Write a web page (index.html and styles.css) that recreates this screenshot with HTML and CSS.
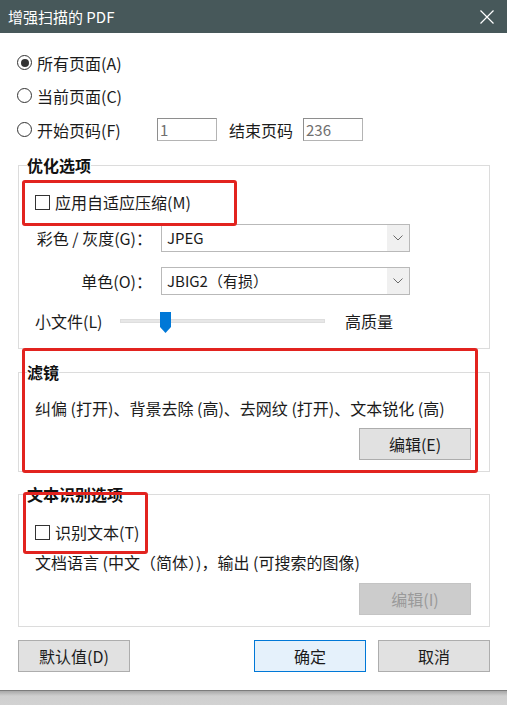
FILE: index.html
```html
<!DOCTYPE html>
<html lang="zh-CN">
<head>
<meta charset="utf-8">
<title>增强扫描的 PDF</title>
<link rel="stylesheet" href="styles.css">
</head>
<body>
<div class="dialog">
  <div class="titlebar">
    <span class="title">增强扫描的 PDF</span>
    <svg class="close" width="14" height="14" viewBox="0 0 14 14"><path d="M0.5 0.5L13.5 13.5M13.5 0.5L0.5 13.5" stroke="#ffffff" stroke-width="1.2" fill="none"/></svg>
  </div>
  <div class="content">
    <div class="pages">
      <div class="radio-row"><span class="radio checked"></span><span>所有页面(A)</span></div>
      <div class="radio-row"><span class="radio"></span><span>当前页面(C)</span></div>
      <div class="radio-row">
        <span class="radio"></span><span class="range-label">开始页码(F)</span>
        <span class="field">1</span>
        <span class="end-label">结束页码</span>
        <span class="field">236</span>
      </div>
    </div>

    <fieldset class="group g-opt">
      <legend>优化选项</legend>
      <div class="group-body">
        <div class="check-row"><span class="check"></span><span>应用自适应压缩(M)</span></div>
        <div class="combo-row">
          <span class="combo-label">彩色 / 灰度(G)：</span>
          <div class="combo"><span class="combo-value">JPEG</span><span class="combo-arrow"><svg width="10" height="6" viewBox="0 0 10 6"><path d="M0.5 0.5L5 5L9.5 0.5" stroke="#6a6a6a" stroke-width="1" fill="none"/></svg></span></div>
        </div>
        <div class="combo-row combo-row-2">
          <span class="combo-label">单色(O)：</span>
          <div class="combo"><span class="combo-value">JBIG2（有损）</span><span class="combo-arrow"><svg width="10" height="6" viewBox="0 0 10 6"><path d="M0.5 0.5L5 5L9.5 0.5" stroke="#6a6a6a" stroke-width="1" fill="none"/></svg></span></div>
        </div>
        <div class="slider-row">
          <span class="slider-label">小文件(L)</span>
          <div class="track"><span class="thumb"></span></div>
          <span>高质量</span>
        </div>
      </div>
    </fieldset>

    <fieldset class="group g-filter">
      <legend>滤镜</legend>
      <div class="group-body">
        <div class="text-row">纠偏 (打开)、背景去除 (高)、去网纹 (打开)、文本锐化 (高)</div>
        <div class="btn-row"><button class="btn">编辑(E)</button></div>
      </div>
    </fieldset>

    <fieldset class="group g-ocr">
      <legend>文本识别选项</legend>
      <div class="group-body">
        <div class="check-row"><span class="check"></span><span>识别文本(T)</span></div>
        <div class="text-row text-row-ocr">文档语言 (中文（简体）)，输出 (可搜索的图像)</div>
        <div class="btn-row btn-row-ocr"><button class="btn btn-disabled">编辑(I)</button></div>
      </div>
    </fieldset>

    <div class="footer">
      <button class="btn">默认值(D)</button>
      <div class="footer-right">
        <button class="btn btn-default">确定</button>
        <button class="btn">取消</button>
      </div>
    </div>
  </div>

  <div class="mark mark-1"></div>
  <div class="mark mark-2"></div>
  <div class="mark mark-3"></div>
</div>
<div class="desk"></div>
</body>
</html>
```

FILE: styles.css
```css
* { box-sizing: border-box; }

html, body {
  margin: 0;
  padding: 0;
}

body {
  width: 507px;
  height: 705px;
  overflow: hidden;
  background: #cfcfcf;
  font-family: "Noto Sans CJK SC", "Noto Sans", sans-serif;
  font-size: 16px;
  color: #1b1b1b;
}

.dialog {
  position: relative;
  height: 690px;
  background: #ffffff;
}

.titlebar {
  height: 33px;
  background: #47585a;
  display: flex;
  align-items: center;
  justify-content: space-between;
  padding: 0 13px 0 8px;
  color: #ffffff;
}

.title {
  font-size: 15px;
  line-height: 20px;
}

.close { display: block; }

.content {
  padding: 13px 17px 0 18px;
}

/* page range radios */
.pages {
  display: flex;
  flex-direction: column;
}

.radio-row {
  height: 33px;
  display: flex;
  align-items: center;
  line-height: 22px;
}

.radio-row:last-child { height: 35px; }

.radio {
  width: 15px;
  height: 15px;
  border: 1px solid #333333;
  border-radius: 50%;
  margin-left: -1px;
  margin-right: 5px;
  flex: none;
  display: flex;
  align-items: center;
  justify-content: center;
}

.radio.checked::after {
  content: "";
  width: 8px;
  height: 8px;
  border-radius: 50%;
  background: #333333;
}

.range-label { width: 120px; }

.field {
  width: 60px;
  height: 23px;
  border: 1px solid #b4b4b4;
  border-top-color: #8e8e8e;
  border-left-color: #8e8e8e;
  color: #707070;
  font-size: 15px;
  line-height: 21px;
  padding-left: 2px;
}

.end-label {
  width: 74px;
  margin-left: 12px;
}

/* group boxes */
.group {
  margin: 7px 0 0 0;
  padding: 14px 18px 15px 8px;
  border: 1px solid #dcdcdc;
  min-width: 0;
}

.group legend {
  padding: 0;
  font-weight: bold;
  font-size: 16px;
  line-height: 22px;
  color: #111111;
}

.group-body {
  padding-left: 8px;
  display: flex;
  flex-direction: column;
}

.check-row {
  height: 24px;
  display: flex;
  align-items: center;
  gap: 5px;
  line-height: 22px;
}

.check {
  width: 15px;
  height: 15px;
  border: 1px solid #333333;
  background: #ffffff;
  flex: none;
}

.combo-row {
  margin-top: 10px;
  display: flex;
  align-items: center;
  gap: 9px;
}

.combo-row-2 { margin-top: 15px; }

.combo-label {
  width: 117px;
  text-align: right;
  line-height: 22px;
}

.combo {
  width: 249px;
  height: 28px;
  border: 1px solid #b9b9b9;
  background: #ffffff;
  display: flex;
  align-items: center;
}

.combo-value {
  flex: 1;
  padding-left: 5px;
  font-size: 15px;
  line-height: 22px;
}

.combo-arrow {
  width: 22px;
  height: 26px;
  background: #f0f0f0;
  display: flex;
  align-items: center;
  justify-content: center;
}

.combo-arrow svg { display: block; }

.slider-row {
  margin-top: 14px;
  height: 24px;
  display: flex;
  align-items: center;
  line-height: 22px;
}

.slider-label { width: 85px; }

.track {
  position: relative;
  width: 205px;
  height: 4px;
  background: #e7e7e7;
  border: 1px solid #dedede;
  margin-right: 20px;
}

.thumb {
  position: absolute;
  left: 39px;
  top: -8px;
  width: 11px;
  height: 21px;
  background: #0078d7;
  clip-path: polygon(0 0, 100% 0, 100% 72%, 50% 100%, 0 72%);
}

.g-filter { margin-top: 12px; padding-top: 13px; padding-bottom: 11px; }
.g-ocr { margin-top: 11px; padding-top: 15px; padding-bottom: 11px; }

.text-row {
  height: 24px;
  line-height: 24px;
  white-space: nowrap;
}

.text-row-ocr { margin-top: 6px; }

.btn-row {
  margin-top: 8px;
  display: flex;
  justify-content: flex-end;
}

.btn-row-ocr { margin-top: 9px; }

.btn {
  width: 112px;
  height: 32px;
  margin: 0;
  padding: 0;
  background: #e1e1e1;
  border: 1px solid #adadad;
  font-family: inherit;
  font-size: 16px;
  line-height: 22px;
  color: #1b1b1b;
}

.btn-disabled {
  background: #cccccc;
  border-color: #c4c4c4;
  color: #9a9a9a;
}

.btn-default {
  background: #e5f1fb;
  border-color: #0078d7;
}

.footer {
  margin-top: 13px;
  display: flex;
  justify-content: space-between;
}

.footer-right {
  display: flex;
  gap: 12px;
}

/* red annotation marks */
.mark {
  position: absolute;
  border: 3px solid #e2231f;
  border-radius: 3px;
}

.mark-1 { left: 22px; top: 180px; width: 215px; height: 46px; }
.mark-2 { left: 22px; top: 348px; width: 456px; height: 125px; }
.mark-3 { left: 23px; top: 492px; width: 125px; height: 62px; }

.desk {
  height: 15px;
  border-top: 1px solid #7c7c7c;
  background: linear-gradient(#a8a8a8, #cfcfcf 5px, #d2d2d2);
}
```
